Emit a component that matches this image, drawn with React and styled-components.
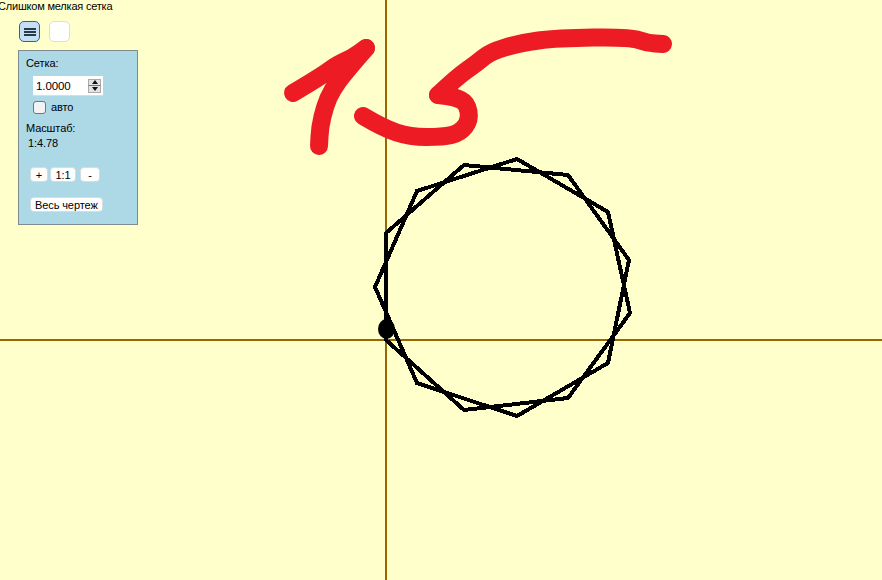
import React from 'react'
import styled, { createGlobalStyle } from 'styled-components'

const GlobalStyle = createGlobalStyle`
  html, body, #root {
    margin: 0;
    height: 100%;
  }
  body {
    background: #ffffcc;
    overflow: hidden;
    font-family: "Liberation Sans", Arial, sans-serif;
    font-size: 11px;
    letter-spacing: -0.1px;
    color: #000;
  }
`

const Page = styled.div`
  position: relative;
  width: 882px;
  height: 580px;
  overflow: hidden;
  background: #ffffcc;
`

const Drawing = styled.svg`
  position: absolute;
  left: 0;
  top: 0;
`

const Overlay = styled.div`
  position: relative;
  display: flex;
  flex-direction: column;
  align-items: flex-start;
`

const Status = styled.div`
  margin-left: -2px;
  height: 13px;
  line-height: 13px;
  letter-spacing: -0.2px;
  white-space: nowrap;
`

const Toolbar = styled.div`
  display: flex;
  gap: 9px;
  margin: 8px 0 8px 19px;
`

const ToolButton = styled.button`
  box-sizing: border-box;
  width: 21px;
  height: 21px;
  padding: 0;
  display: flex;
  align-items: center;
  justify-content: center;
  border-radius: 5px;
  background: ${(p) => (p.$active ? '#c5dff5' : '#fff')};
  border: ${(p) => (p.$active ? '1.5px solid #1c68a8' : '1.5px solid #dcdcdc')};
`

const Panel = styled.div`
  box-sizing: border-box;
  width: 120px;
  height: 175px;
  margin-left: 18px;
  padding: 5px 0 0 7px;
  background: #add8e6;
  border: 1px solid #808b90;
`

const Label = styled.div`
  height: 14px;
  line-height: 14px;
  margin-top: ${(p) => p.$top || 0}px;
  margin-left: ${(p) => p.$indent || 0}px;
`

const Spinner = styled.div`
  box-sizing: border-box;
  display: flex;
  width: 70px;
  height: 20px;
  margin: 6px 0 0 7px;
  background: #fff;
  border-bottom: 1px solid #cfe0e6;
`

const SpinValue = styled.div`
  flex: 1;
  padding-left: 3px;
  line-height: 20px;
  font-size: 11.5px;
`

const SpinArrows = styled.div`
  display: flex;
  flex-direction: column;
  justify-content: center;
  width: 13px;
  margin-right: 2px;
`

const SpinArrow = styled.div`
  box-sizing: border-box;
  height: 7px;
  display: flex;
  align-items: center;
  justify-content: center;
  background: #e4e4e4;
  border: 1px solid #aaa;
  ${(p) => (p.$down ? 'border-top: none;' : 'border-bottom: 1px solid #777;')}
  &::after {
    content: '';
    border-left: 3.5px solid transparent;
    border-right: 3.5px solid transparent;
    ${(p) => (p.$down ? 'border-top: 4px solid #111;' : 'border-bottom: 4px solid #111;')}
  }
`

const CheckRow = styled.label`
  display: flex;
  align-items: center;
  gap: 5px;
  height: 14px;
  margin: 4px 0 0 7px;
`

const CheckBox = styled.span`
  box-sizing: border-box;
  display: block;
  width: 13px;
  height: 13px;
  background: #f3f3f3;
  border: 1px solid #767676;
  border-radius: 3px;
`

const ButtonRow = styled.div`
  display: flex;
  gap: 2px;
  margin: ${(p) => p.$top}px 0 0 4px;
`

const SmallButton = styled.div`
  box-sizing: border-box;
  height: 15px;
  line-height: 14px;
  min-width: ${(p) => p.$w}px;
  margin-left: ${(p) => p.$ml || 0}px;
  padding: 0 4px;
  text-align: center;
  white-space: nowrap;
  background: #fff;
  border: 1px solid #d6dde0;
  border-radius: 4px;
`

const star = [
  [386, 233], [464, 165], [568, 175], [629, 260], [608, 363],
  [517, 416], [417, 383], [375, 287], [417, 191], [517, 159],
  [608, 212], [630, 313], [568, 398], [464, 410], [386, 340],
]
  .map((p) => p.join(','))
  .join(' ')

// hand strokes, each broken at its sharp corners
const strokes = [
  [[293, 93], [320, 77], [338, 64], [352, 58], [366, 48]],
  [[366, 48], [345, 72], [332, 90], [325, 106], [320, 127], [319, 146]],
  [[363, 116], [383, 128], [410, 137], [443, 137], [460, 133], [470, 120], [467, 103], [455, 97], [438, 95]],
  [[438, 95], [457, 77], [477, 63], [490, 52], [520, 43], [557, 38], [630, 37], [647, 43], [663, 44]],
]

const smooth = (pts) => {
  let d = `M${pts[0][0]} ${pts[0][1]}`
  for (let i = 1; i < pts.length - 1; i++) {
    const mx = (pts[i][0] + pts[i + 1][0]) / 2
    const my = (pts[i][1] + pts[i + 1][1]) / 2
    d += ` Q${pts[i][0]} ${pts[i][1]} ${mx} ${my}`
  }
  const last = pts[pts.length - 1]
  return `${d} L${last[0]} ${last[1]}`
}

const App = () => {
  return (
    <Page>
      <GlobalStyle />
      <Drawing width="882" height="580">
        <rect x="385" y="0" width="2" height="580" fill="#996600" />
        <rect x="0" y="339" width="882" height="2" fill="#996600" />
        <polygon points={star} fill="none" stroke="#000" strokeWidth="4" shapeRendering="crispEdges" />
        <ellipse cx="386.5" cy="329" rx="8.5" ry="10" fill="#000" />
        {strokes.map((pts) => (
          <path key={pts.join()} d={smooth(pts)} fill="none" stroke="#ed1c24" strokeWidth="18" strokeLinecap="round" strokeLinejoin="round" />
        ))}
      </Drawing>
      <Overlay>
        <Status>Слишком мелкая сетка</Status>
        <Toolbar>
          <ToolButton $active>
            <svg width="12" height="8" viewBox="0 0 12 8">
              <path d="M0 1h12M0 4h12M0 7h12" stroke="#2b3a48" strokeWidth="2" />
            </svg>
          </ToolButton>
          <ToolButton />
        </Toolbar>
        <Panel>
          <Label>Сетка:</Label>
          <Spinner>
            <SpinValue>1.0000</SpinValue>
            <SpinArrows>
              <SpinArrow />
              <SpinArrow $down />
            </SpinArrows>
          </Spinner>
          <CheckRow>
            <CheckBox />
            авто
          </CheckRow>
          <Label $top={7}>Масштаб:</Label>
          <Label $top={1} $indent={2}>1:4.78</Label>
          <ButtonRow $top={17}>
            <SmallButton $w={18}>+</SmallButton>
            <SmallButton $w={26}>1:1</SmallButton>
            <SmallButton $w={20} $ml={2}>-</SmallButton>
          </ButtonRow>
          <ButtonRow $top={15}>
            <SmallButton>Весь чертеж</SmallButton>
          </ButtonRow>
        </Panel>
      </Overlay>
    </Page>
  )
}

export default App
